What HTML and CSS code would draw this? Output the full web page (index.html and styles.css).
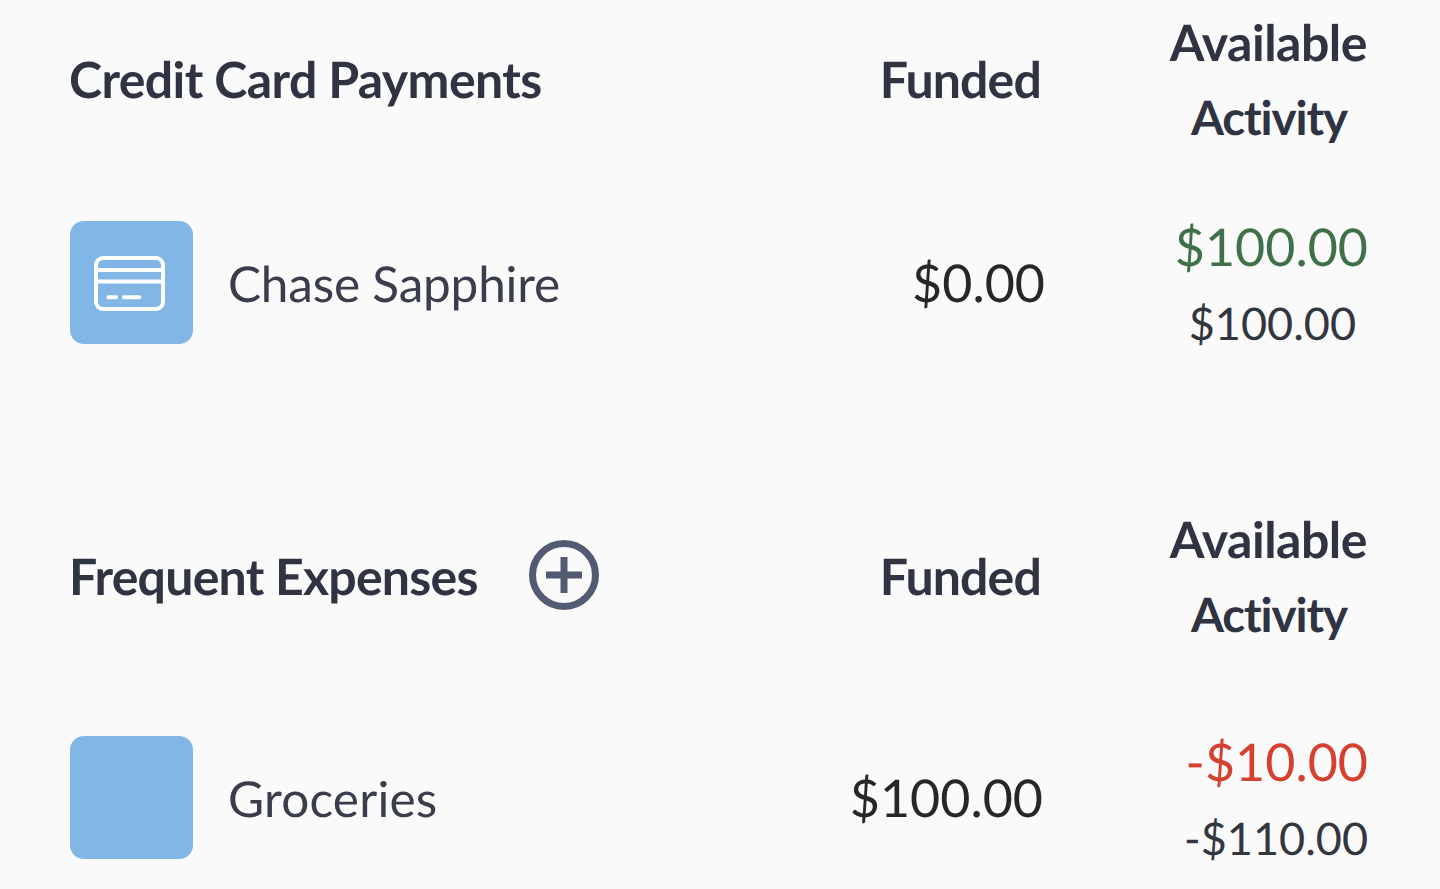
FILE: index.html
```html
<!DOCTYPE html>
<html lang="en">
<head>
<meta charset="utf-8">
<title>Budget</title>
<link rel="stylesheet" href="styles.css">
</head>
<body>
<section class="group group-first">
  <header class="row head">
    <div class="title"><h2>Credit Card Payments</h2></div>
    <div class="funded-h">Funded</div>
    <div class="avail-h"><span>Available</span><span>Activity</span></div>
  </header>
  <div class="row item">
    <div class="title">
      <div class="tile">
        <svg class="card" viewBox="0 0 71 55" fill="none" stroke="#fff" stroke-width="4" stroke-linecap="round" stroke-linejoin="round"><rect x="2" y="2" width="67" height="51" rx="7"/><path d="M2 14H69M2 25.6H69M14.4 41.3H22M30 41.3H45.4"/></svg>
      </div>
      <span class="name name-long">Chase Sapphire</span>
    </div>
    <div class="funded">$0.00</div>
    <div class="avail"><span class="big pos">$100.00</span><span class="small inset">$100.00</span></div>
  </div>
</section>
<section class="group group-second">
  <header class="row head">
    <div class="title"><h2 class="h2-tight">Frequent Expenses</h2>
      <svg class="plus" viewBox="0 0 70 70" fill="none" stroke="#535a73" stroke-width="7"><circle cx="35" cy="35" r="31.5"/><path d="M35 17V53M17 35H53"/></svg>
    </div>
    <div class="funded-h">Funded</div>
    <div class="avail-h"><span>Available</span><span>Activity</span></div>
  </header>
  <div class="row item">
    <div class="title">
      <div class="tile"></div>
      <span class="name name-short">Groceries</span>
    </div>
    <div class="funded tight">$100.00</div>
    <div class="avail"><span class="big neg">-$10.00</span><span class="small">-$110.00</span></div>
  </div>
</section>
</body>
</html>
```
FILE: styles.css
```css
html, body { margin: 0; padding: 0; height: 889px; overflow: hidden; background: #fafafb; }
body { font-family: Lato, sans-serif; color: #2f3342; padding: 0 72px 0 70px; text-rendering: geometricPrecision; }
.group-first { padding-top: 5px; }
.group-second { margin-top: 158px; }
.row { display: flex; align-items: center; }
.title { flex: 1; display: flex; align-items: center; }
.head { height: 150px; font-size: 50px; font-weight: 700; letter-spacing: -0.6px; }
h2 { margin: -2px 0 0 -1px; font: inherit; }
.h2-tight { letter-spacing: -0.76px; }
.funded-h { width: 300px; text-align: right; margin: -2px 4px 0 0; letter-spacing: -0.85px; }
.funded { width: 300px; text-align: right; font-size: 52px; color: #26272b; padding-top: 1px; }
.tight { margin-right: 2px; width: 298px; }
.avail-h, .avail { width: 323px; display: flex; flex-direction: column; align-items: flex-end; }
.avail-h { line-height: 75px; margin-top: -1px; }
.avail-h span:first-child { margin-right: 1px; letter-spacing: -0.5px; }
.avail-h span:last-child { margin: 0 21px 0 0; font-size: 47.5px; letter-spacing: -1.1px; }
.avail { padding-top: 5px; }
.item { height: 123px; margin-top: 66px; }
.group-second .item { margin-top: 84px; }
.tile { width: 122.5px; height: 123px; border-radius: 14px; background: #81b6e6; display: flex; align-items: center; justify-content: center; flex: none; }
.card { width: 71px; height: 55px; margin: 2px 3px 0 0; }
.name { margin-left: 35.5px; font-size: 49.5px; color: #3a3d4b; padding-top: 1px; }
.name-long { letter-spacing: -0.2px; }
.name-short { letter-spacing: 0.2px; }
.big { font-size: 52px; line-height: 75px; }
.small { font-size: 45px; line-height: 76px; color: #33363f; }
.inset { margin-right: 12px; }
.pos { color: #3f7048; }
.neg { color: #d6412f; }
.plus { width: 70px; height: 70px; margin-left: 51px; margin-top: -4px; }
```
